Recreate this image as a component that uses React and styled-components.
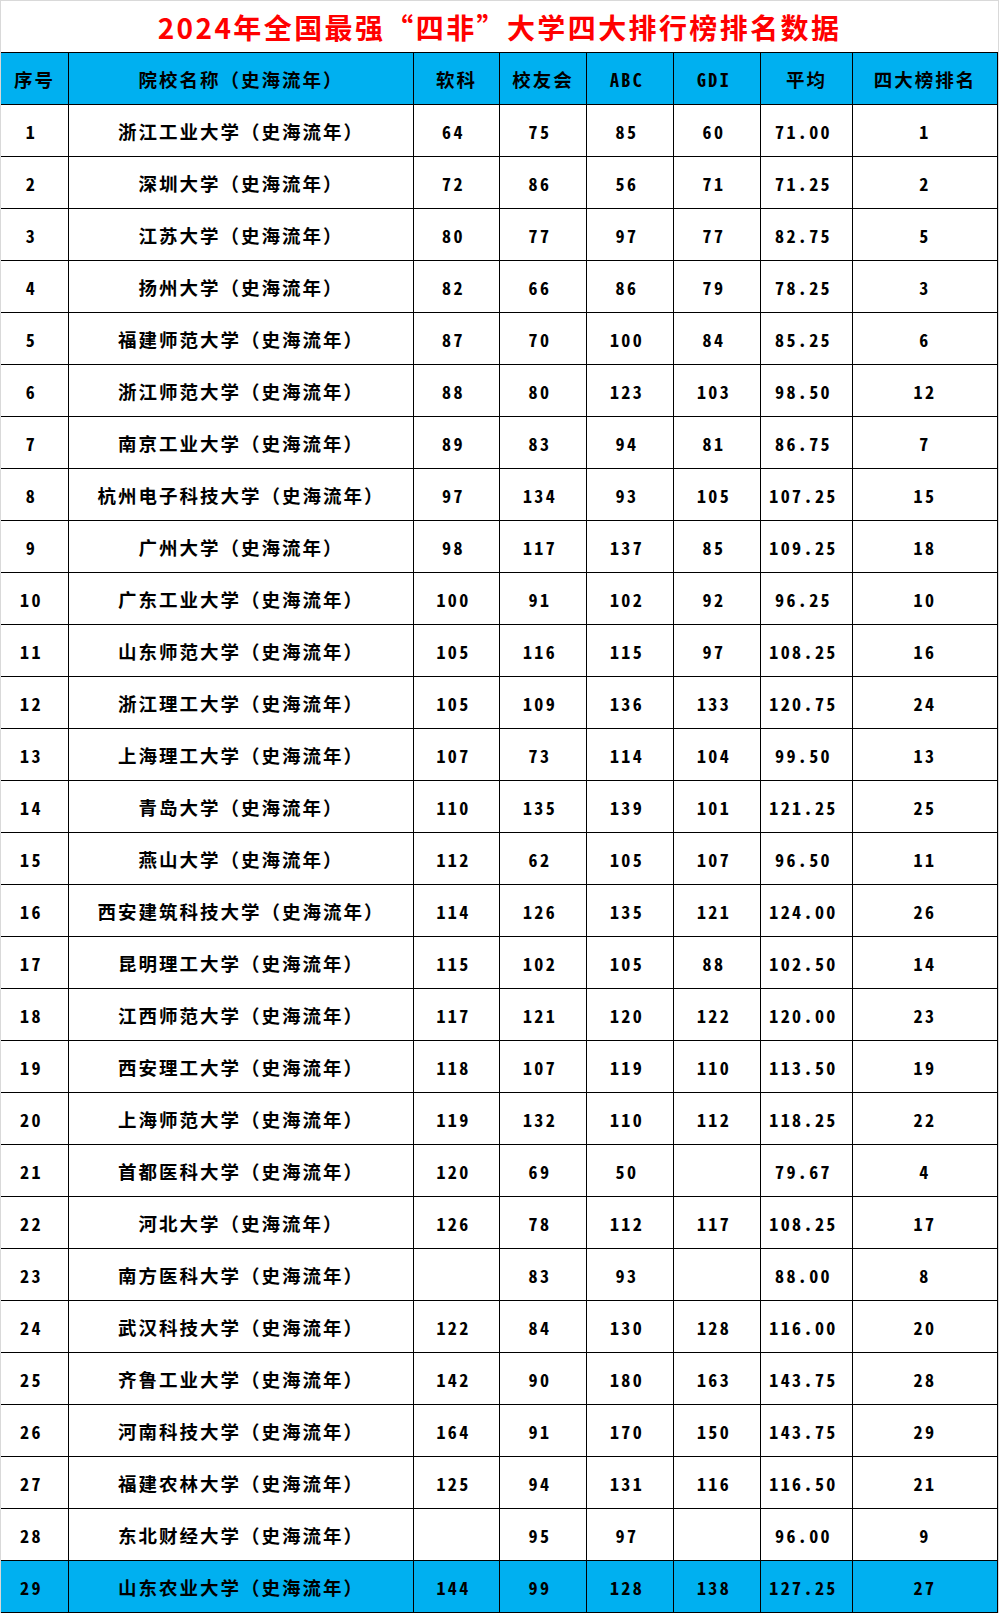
import styled, { createGlobalStyle } from "styled-components";

const GlobalStyle = createGlobalStyle`
  html, body {
    margin: 0;
    padding: 0;
    background: #ffffff;
  }
  * {
    box-sizing: border-box;
  }
`;

const COLUMNS = "68px 345px 86px 87px 87px 87px 92px 145px";

const headers = [
  { label: "序号" },
  { label: "院校名称（史海流年）" },
  { label: "软科" },
  { label: "校友会" },
  { label: "ABC", mono: true },
  { label: "GDI", mono: true },
  { label: "平均" },
  { label: "四大榜排名" },
];

const rows = [
  [1, "浙江工业大学", "64", "75", "85", "60", "71.00", "1"],
  [2, "深圳大学", "72", "86", "56", "71", "71.25", "2"],
  [3, "江苏大学", "80", "77", "97", "77", "82.75", "5"],
  [4, "扬州大学", "82", "66", "86", "79", "78.25", "3"],
  [5, "福建师范大学", "87", "70", "100", "84", "85.25", "6"],
  [6, "浙江师范大学", "88", "80", "123", "103", "98.50", "12"],
  [7, "南京工业大学", "89", "83", "94", "81", "86.75", "7"],
  [8, "杭州电子科技大学", "97", "134", "93", "105", "107.25", "15"],
  [9, "广州大学", "98", "117", "137", "85", "109.25", "18"],
  [10, "广东工业大学", "100", "91", "102", "92", "96.25", "10"],
  [11, "山东师范大学", "105", "116", "115", "97", "108.25", "16"],
  [12, "浙江理工大学", "105", "109", "136", "133", "120.75", "24"],
  [13, "上海理工大学", "107", "73", "114", "104", "99.50", "13"],
  [14, "青岛大学", "110", "135", "139", "101", "121.25", "25"],
  [15, "燕山大学", "112", "62", "105", "107", "96.50", "11"],
  [16, "西安建筑科技大学", "114", "126", "135", "121", "124.00", "26"],
  [17, "昆明理工大学", "115", "102", "105", "88", "102.50", "14"],
  [18, "江西师范大学", "117", "121", "120", "122", "120.00", "23"],
  [19, "西安理工大学", "118", "107", "119", "110", "113.50", "19"],
  [20, "上海师范大学", "119", "132", "110", "112", "118.25", "22"],
  [21, "首都医科大学", "120", "69", "50", "", "79.67", "4"],
  [22, "河北大学", "126", "78", "112", "117", "108.25", "17"],
  [23, "南方医科大学", "", "83", "93", "", "88.00", "8"],
  [24, "武汉科技大学", "122", "84", "130", "128", "116.00", "20"],
  [25, "齐鲁工业大学", "142", "90", "180", "163", "143.75", "28"],
  [26, "河南科技大学", "164", "91", "170", "150", "143.75", "29"],
  [27, "福建农林大学", "125", "94", "131", "116", "116.50", "21"],
  [28, "东北财经大学", "", "95", "97", "", "96.00", "9"],
  [29, "山东农业大学", "144", "99", "128", "138", "127.25", "27"],
];

const Sheet = styled.div`
  width: 999px;
  border-left: 1px solid #d9d9d9;
  border-right: 1px solid #d9d9d9;
`;

const Title = styled.h1`
  margin: 0;
  height: 52px;
  border-top: 1px solid #d9d9d9;
  display: flex;
  align-items: center;
  justify-content: center;
  padding-top: 1px;
  color: #ff0000;
  font-family: "Noto Sans CJK SC", "Noto Sans", sans-serif;
  font-size: 28px;
  font-weight: 700;
  letter-spacing: 2.4px;
`;

const Table = styled.div`
  border-top: 1px solid #000;
`;

const Row = styled.div`
  display: grid;
  grid-template-columns: ${COLUMNS};
  height: 52px;
  border-bottom: 1px solid #000;
  background: ${(p) => (p.$blue ? "#00b0f0" : "#ffffff")};
`;

const Cell = styled.div`
  display: flex;
  align-items: center;
  justify-content: center;
  border-right: 1px solid #000;
  color: #000;
  font-weight: 700;
  white-space: nowrap;
  font-family: "Noto Sans CJK SC", "Noto Sans", sans-serif;
  font-size: 18.5px;
  letter-spacing: 2px;
`;

const NumCell = styled(Cell)`
  font-family: "Noto Sans Mono CJK SC", "Noto Sans CJK SC", "DejaVu Sans Mono",
    monospace;
  font-size: 18px;
  letter-spacing: 2.4px;
  padding-right: ${(p) => (p.$centered ? "0" : "6px")};
`;

export default function App() {
  return (
    <>
      <GlobalStyle />
      <Sheet>
        <Title>2024年全国最强“四非”大学四大排行榜排名数据</Title>
        <Table>
          <Row $blue>
            {headers.map((h) =>
              h.mono ? (
                <NumCell key={h.label}>{h.label}</NumCell>
              ) : (
                <Cell key={h.label}>{h.label}</Cell>
              )
            )}
          </Row>
          {rows.map((r) => (
            <Row key={r[0]} $blue={r[0] === 29}>
              <NumCell>{r[0]}</NumCell>
              <Cell>{r[1]}（史海流年）</Cell>
              {r.slice(2).map((v, i) => (
                <NumCell key={i} $centered={i === 5}>
                  {v}
                </NumCell>
              ))}
            </Row>
          ))}
        </Table>
      </Sheet>
    </>
  );
}
